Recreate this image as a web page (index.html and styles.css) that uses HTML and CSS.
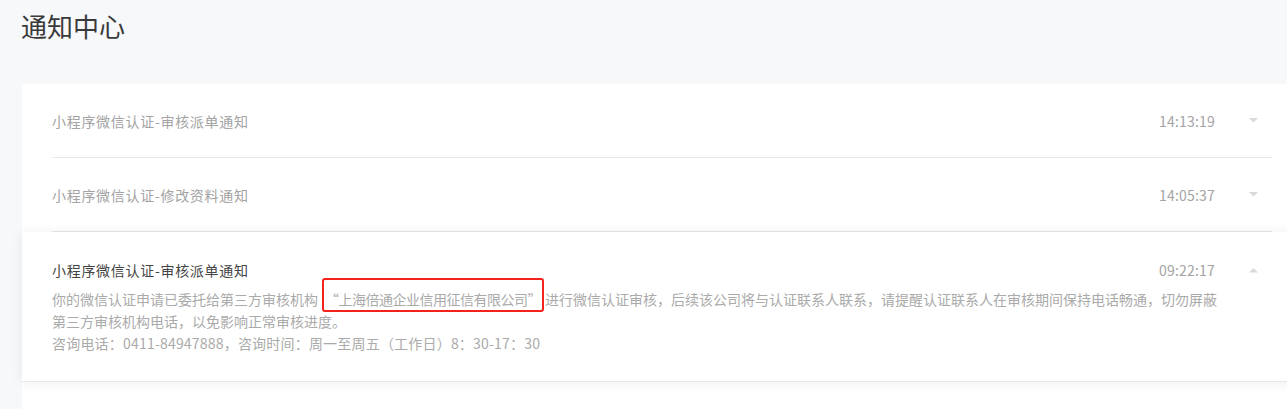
FILE: index.html
```html
<!DOCTYPE html>
<html lang="zh-CN">
<head>
    <meta charset="UTF-8">
    <meta name="viewport" content="width=device-width, initial-scale=1.0">
    <title>通知中心</title>
    <link rel="stylesheet" href="styles.css">
</head>
<body>
    <div class="page">
        <h1 class="page-title">通知中心</h1>
        <div class="notice-list">
            <div class="notice-item">
                <div class="notice-head">
                    <span class="notice-title">小程序微信认证-审核派单通知</span>
                    <span class="notice-time">14:13:19</span>
                    <svg class="notice-arrow" width="9" height="5" viewBox="0 0 9 5"><polygon points="0,0 9,0 4.5,4.5" fill="#d9d9d9"/></svg>
                </div>
            </div>
            <div class="notice-item">
                <div class="notice-head">
                    <span class="notice-title">小程序微信认证-修改资料通知</span>
                    <span class="notice-time">14:05:37</span>
                    <svg class="notice-arrow" width="9" height="5" viewBox="0 0 9 5"><polygon points="0,0 9,0 4.5,4.5" fill="#d9d9d9"/></svg>
                </div>
            </div>
            <div class="notice-item open">
                <div class="notice-head">
                    <span class="notice-title">小程序微信认证-审核派单通知</span>
                    <span class="notice-time">09:22:17</span>
                    <svg class="notice-arrow" width="9" height="5" viewBox="0 0 9 5"><polygon points="0,4.5 9,4.5 4.5,0" fill="#d9d9d9"/></svg>
                </div>
                <div class="notice-body">
                    你的微信认证申请已委托给第三方审核机构<span class="mark">“上海倍通企业信用征信有限公司”</span>进行微信认证审核，后续该公司将与认证联系人联系，请提醒认证联系人在审核期间保持电话畅通，切勿屏蔽<br>第三方审核机构电话，以免影响正常审核进度。<br><span class="contact">咨询电话：0411-84947888，咨询时间：周一至周五（工作日）8：30-17：30</span>
                </div>
            </div>
            <div class="notice-rest"></div>
        </div>
    </div>
</body>
</html>
```

FILE: styles.css
```css
* {
    margin: 0;
    padding: 0;
    box-sizing: border-box;
    font-family: "Noto Sans CJK SC", "Noto Sans", sans-serif;
}
body {
    background: #f7f8fa;
    height: 409px;
    overflow: hidden;
}
.page {
    padding: 8px 0 0 22px;
}
.page-title {
    font-size: 26px;
    font-weight: normal;
    line-height: 36px;
    color: #3a3a3a;
    margin-bottom: 40px;
    margin-left: -1px;
}
.notice-list {
    background: #fff;
    margin-right: -15px;
}
.notice-item {
    padding: 0 30px;
}
.notice-head {
    display: flex;
    align-items: center;
    height: 74px;
    border-bottom: 1px solid #e8e8e8;
}
.notice-title {
    flex: 1;
    font-size: 14px;
    color: #a3a3a3;
    letter-spacing: 0.7px;
}
.notice-time {
    font-size: 14px;
    color: #a3a3a3;
    letter-spacing: 0.2px;
}
.notice-arrow {
    margin: 0 14px 0 34px;
}
.notice-item.open {
    position: relative;
    padding: 27px 30px 27px;
    box-shadow: 0 1px 12px rgba(0, 0, 0, 0.07);
    border-bottom: 1px solid #e8e8e8;
}
.notice-item.open .notice-head {
    height: 22px;
    border-bottom: none;
}
.notice-item.open .notice-title {
    color: #444;
}
.notice-body {
    margin-top: 7px;
    padding-right: 30px;
    font-size: 14px;
    line-height: 22px;
    color: #aaa;
}
.mark {
    border: 2px solid #f5221b;
    border-radius: 3px;
    padding: 9px 1px 1px 1px;
    margin: 0 1px 0 4px;
    letter-spacing: -0.5px;
}
.contact {
    letter-spacing: 0.2px;
}
.notice-rest {
    height: 40px;
}
```
